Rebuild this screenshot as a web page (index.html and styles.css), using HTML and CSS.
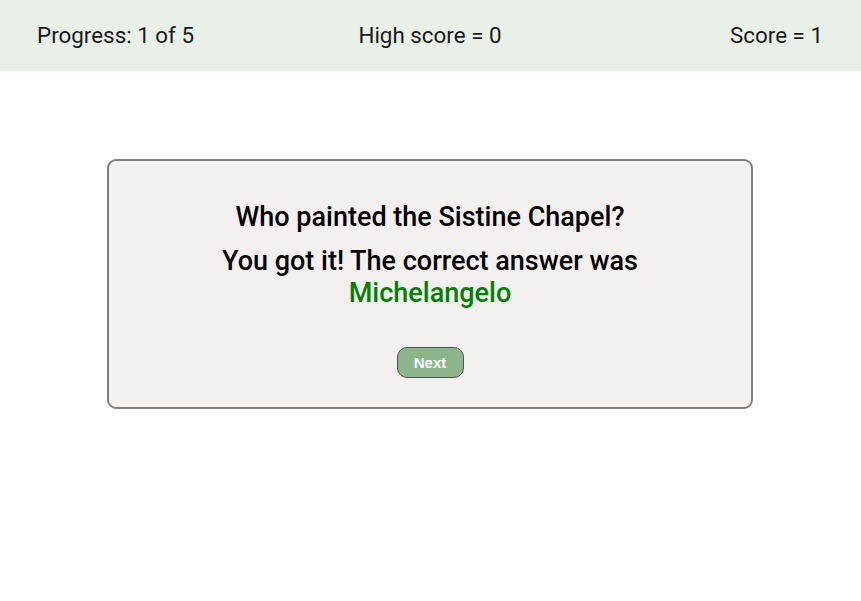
FILE: index.html
```html
<!DOCTYPE html>
<html>
<head>
<meta charset="utf-8">
<link rel="stylesheet" href="styles.css">
</head>
<body>
<header class="topbar">
  <div class="stat stat-left">Progress: 1 of 5</div>
  <div class="stat stat-center">High score = 0</div>
  <div class="stat stat-right">Score = 1</div>
</header>
<main class="main">
  <section class="card">
    <p class="question">Who painted the Sistine Chapel?</p>
    <p class="result">You got it! The correct answer was<br><span class="answer">Michelangelo</span></p>
    <button class="next">Next</button>
  </section>
</main>
</body>
</html>
```
FILE: styles.css
```css
html, body {
  margin: 0;
  padding: 0;
  background: #ffffff;
  font-family: Roboto, "Liberation Sans", sans-serif;
}
.topbar {
  display: grid;
  grid-template-columns: 1fr 1fr 1fr;
  align-items: center;
  box-sizing: border-box;
  height: 71px;
  padding: 0 38px 2px 37px;
  background: #e8f0e8;
  font-size: 22.4px;
  color: #1a1a1a;
}
.stat-left { text-align: left; }
.stat-center { text-align: center; }
.stat-right { text-align: right; }
.main {
  padding: 88px 108px 0 107px;
  display: flex;
}
.card {
  flex: 1;
  box-sizing: border-box;
  border: 2px solid #808080;
  border-radius: 9px;
  background: #f5f0f0;
  padding: 41px 20px 29px;
  display: flex;
  flex-direction: column;
  align-items: center;
  text-align: center;
}
.question {
  margin: 0;
  font-size: 27px;
  font-weight: 500;
  line-height: 30px;
  color: #000;
}
.result {
  margin: 13px 0 0;
  font-size: 27px;
  font-weight: 500;
  line-height: 32px;
  color: #000;
}
.answer {
  color: #008000;
}
.next {
  margin-top: 38px;
  width: 67px;
  height: 31px;
  border: 1px solid #555;
  border-radius: 10px;
  background: #8cb58c;
  color: #fff;
  font-family: "Liberation Sans", Arial, sans-serif;
  font-weight: bold;
  font-size: 15px;
  padding: 0;
}
```
